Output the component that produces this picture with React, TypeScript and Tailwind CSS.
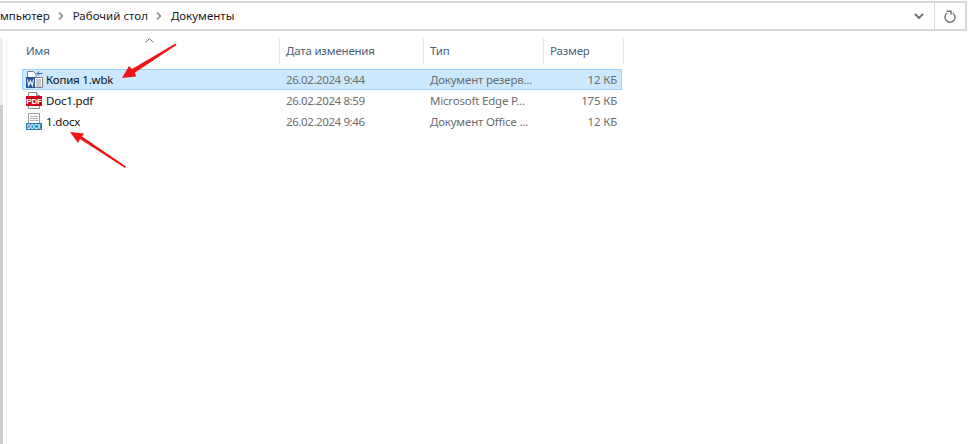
import { ReactNode } from "react";

const rows = [
  { name: "Копия 1.wbk", date: "26.02.2024 9:44", type: "Документ резерв...", size: "12 КБ", icon: "wbk", selected: true },
  { name: "Doc1.pdf", date: "26.02.2024 8:59", type: "Microsoft Edge P...", size: "175 КБ", icon: "pdf", selected: false },
  { name: "1.docx", date: "26.02.2024 9:46", type: "Документ Office ...", size: "12 КБ", icon: "docx", selected: false },
];

function WbkIcon() {
  return (
    <svg width="17" height="17" viewBox="0 0 17 17" className="shrink-0">
      <path d="M1.500 6V.5h6l2.500 2.500V6" fill="#fff" stroke="#7a7f8a" />
      <path d="M7 6.500h9.500v10H7z" fill="#fff" stroke="#7a7f8a" />
      <path d="M10 9h5M10 11h5M10 13h5M10 15h5" stroke="#8b8f96" />
      <path d="M11 2.500h5.500" stroke="#2b6cb0" />
      <path d="M13 .5l-2 2 2 2" fill="none" stroke="#2b6cb0" />
      <rect x="0" y="6" width="9" height="11" fill="#2b5797" />
      <path d="M1.500 8.500l1.200 6 1.800-4.500 1.800 4.500 1.200-6" fill="none" stroke="#fff" strokeWidth="1.100" />
    </svg>
  );
}

function PdfIcon() {
  return (
    <svg width="17" height="17" viewBox="0 0 17 17" className="shrink-0">
      <path d="M2.500 5V.5h8l3 3V5" fill="#fff" stroke="#8a8a8a" />
      <path d="M10.500.5v3h3" fill="#eee" stroke="#8a8a8a" />
      <rect x="0" y="4" width="16" height="10" fill="#d0021b" />
      <text x="8" y="12" textAnchor="middle" fontSize="8" fontWeight="700" fill="#fff" fontFamily="'Liberation Sans', sans-serif">
        PDF
      </text>
      <path d="M2.500 14v2.500h11V14" fill="#fff" stroke="#8a8a8a" />
    </svg>
  );
}

function DocxIcon() {
  return (
    <svg width="17" height="17" viewBox="0 0 17 17" className="shrink-0">
      <path d="M2.500 10V.5h11V10" fill="#fff" stroke="#9a9a9a" />
      <path d="M4 3.500h8M4 5.500h8M4 7.500h8" stroke="#b4b4b4" />
      <rect x="0" y="10" width="16" height="7" fill="#1f7bb0" />
      <text transform="translate(1 15.800) scale(.75 1)" fontSize="6.500" fontWeight="700" fill="#fff" fontFamily="'Liberation Sans', sans-serif">
        DOCX
      </text>
    </svg>
  );
}

function Crumb({ children }: { children: ReactNode }) {
  return <span className="text-[11.5px] text-[#1b1b1b] whitespace-nowrap">{children}</span>;
}

function CrumbArrow() {
  return (
    <svg width="5" height="8" viewBox="0 0 5 8" className="ml-[8px] mr-[10px] shrink-0">
      <path d="M1 .5L4.500 4 1 7.500" fill="none" stroke="#8c8c8c" strokeWidth="1.600" />
    </svg>
  );
}

function HeaderCell({ width, pad, label }: { width: string; pad: string; label: string }) {
  return (
    <div className={`${width} ${pad} h-full flex items-center border-r border-[#e5e5e5] text-[11.5px] tracking-[-0.2px] text-[#4c607a] shrink-0`}>
      {label}
    </div>
  );
}

export default function App() {
  return (
    <div className="relative w-[977px] h-[444px] overflow-hidden bg-white font-['Noto_Sans','Open_Sans',sans-serif] flex flex-col">
      {/* Address bar */}
      <div className="mt-px w-[967px] h-[30px] shrink-0 flex items-center border-y-2 border-r-2 border-[#d9d9d9]">
        <div className="flex-1 flex items-center">
          <Crumb>мпьютер</Crumb>
          <CrumbArrow />
          <Crumb>Рабочий стол</Crumb>
          <CrumbArrow />
          <Crumb>Документы</Crumb>
        </div>
        <svg width="10" height="7" viewBox="0 0 10 7" className="mr-[10px]">
          <path d="M1 1l4 4 4-4" fill="none" stroke="#6b6b6b" strokeWidth="1.800" />
        </svg>
        <div className="w-[31px] h-full flex items-center justify-center border-l border-[#d9d9d9]">
          <svg width="12" height="13" viewBox="0 0 12 13">
            <path d="M3.200 3A5 5 0 1 0 8.800 3" fill="none" stroke="#777" strokeWidth="1.500" />
            <path d="M2.500 1.200h4.500v3.300" fill="none" stroke="#777" strokeWidth="1.500" />
          </svg>
        </div>
      </div>

      <div className="flex-1 flex pt-[7px] min-h-0">
        {/* Scrollbar edge */}
        <div className="w-[3px] shrink-0 flex flex-col">
          <div className="h-[67px] bg-[#f0f0f0]" />
          <div className="flex-1 bg-[#cdcdcd]" />
        </div>
        <div className="w-[3px] shrink-0" />
        <div className="flex-1 border-l border-[#f0f0f0]">
          {/* Column headers */}
          <div className="relative ml-[15px] h-[25px] flex">
            <HeaderCell width="w-[258px]" pad="pl-[4px]" label="Имя" />
            <HeaderCell width="w-[144px]" pad="pl-[6px]" label="Дата изменения" />
            <HeaderCell width="w-[120px]" pad="pl-[6px]" label="Тип" />
            <HeaderCell width="w-[80px]" pad="pl-[6px]" label="Размер" />
            <svg width="9" height="5" viewBox="0 0 9 5" className="absolute left-[123px] top-0">
              <path d="M.5 4.500l4-4 4 4" fill="none" stroke="#7b7b7b" />
            </svg>
          </div>
          {/* Files */}
          <div className="ml-[15px] mt-[6px] w-[600px]">
            {rows.map((r) => (
              <div
                key={r.name}
                className={
                  r.selected
                    ? "h-[21px] flex items-center text-[11.5px] tracking-[-0.2px] border border-[#99d1ff] bg-[#cce8ff]"
                    : "h-[21px] flex items-center text-[11.5px] tracking-[-0.2px] border border-transparent"
                }
              >
                <div className="w-[257px] shrink-0 pl-[3px] flex items-center gap-[3px] text-[#111]">
                  {r.icon === "wbk" && <WbkIcon />}
                  {r.icon === "pdf" && <PdfIcon />}
                  {r.icon === "docx" && <DocxIcon />}
                  <span>{r.name}</span>
                </div>
                <div className="w-[144px] shrink-0 pl-[6px] text-[#6d6d6d] tracking-[-0.4px]">{r.date}</div>
                <div className="w-[120px] shrink-0 pl-[6px] text-[#6d6d6d] whitespace-nowrap">{r.type}</div>
                <div className="flex-1 pr-[4px] text-right text-[#6d6d6d]">{r.size}</div>
              </div>
            ))}
          </div>
        </div>
      </div>

      {/* Red arrows drawn over the screenshot */}
      <svg width="977" height="444" viewBox="0 0 977 444" className="absolute inset-0 pointer-events-none">
        <path d="M175.500 43.500L176.500 45L135 72.500L136 76.500L122 78L129 66L132 69Z" fill="#f01414" />
        <path d="M126 166.500L125 168L80 139L78 143L70 132L84 133.500L82 136.500Z" fill="#f01414" />
      </svg>
    </div>
  );
}
